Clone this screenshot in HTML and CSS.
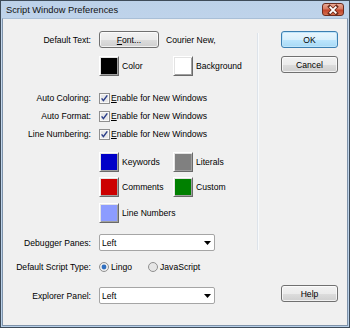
FILE: index.html
```html
<!DOCTYPE html>
<html>
<head>
<meta charset="utf-8">
<link rel="stylesheet" href="styles.css">
</head>
<body>
<div class="window">
  <div class="titlebar">
    <span class="title">Script Window Preferences</span>
    <div class="close">
      <svg width="21" height="12" viewBox="0 0 21 12">
        <path d="M7 2.5 L14 9.5 M14 2.5 L7 9.5" stroke="#6a2a1c" stroke-width="3.6" stroke-linecap="square"/>
        <path d="M7 2.5 L14 9.5 M14 2.5 L7 9.5" stroke="#ffffff" stroke-width="2"/>
      </svg>
    </div>
  </div>
  <div class="client">
    <div class="main">
      <div class="row r1">
        <span class="lbl">Default Text:</span>
        <div class="btn font-btn"><span><u>F</u>ont...</span></div>
        <span class="font-name">Courier New,</span>
      </div>
      <div class="row r2">
        <span class="lbl"></span>
        <div class="swatches">
          <div class="sw"><span class="chip" style="background:#000000"></span><span>Color</span></div>
          <div class="sw"><span class="chip" style="background:#ffffff"></span><span>Background</span></div>
        </div>
      </div>
      <div class="row r3">
        <span class="lbl">Auto Coloring:</span>
        <span class="check"><svg width="11" height="11" viewBox="0 0 11 11"><rect x="0.5" y="0.5" width="10" height="10" fill="#f4f4f4" stroke="#8f8f8f"/><rect x="1.5" y="1.5" width="8" height="8" fill="#e8e8e8" stroke="#f8f8f8"/><path d="M2.6 5.4 L4.4 7.6 L8.3 2.4" fill="none" stroke="#2b3f8a" stroke-width="1.5"/></svg></span>
        <span class="cl"><u>E</u>nable for New Windows</span>
      </div>
      <div class="row r4">
        <span class="lbl">Auto Format:</span>
        <span class="check"><svg width="11" height="11" viewBox="0 0 11 11"><rect x="0.5" y="0.5" width="10" height="10" fill="#f4f4f4" stroke="#8f8f8f"/><rect x="1.5" y="1.5" width="8" height="8" fill="#e8e8e8" stroke="#f8f8f8"/><path d="M2.6 5.4 L4.4 7.6 L8.3 2.4" fill="none" stroke="#2b3f8a" stroke-width="1.5"/></svg></span>
        <span class="cl"><u>E</u>nable for New Windows</span>
      </div>
      <div class="row r5">
        <span class="lbl">Line Numbering:</span>
        <span class="check"><svg width="11" height="11" viewBox="0 0 11 11"><rect x="0.5" y="0.5" width="10" height="10" fill="#f4f4f4" stroke="#8f8f8f"/><rect x="1.5" y="1.5" width="8" height="8" fill="#e8e8e8" stroke="#f8f8f8"/><path d="M2.6 5.4 L4.4 7.6 L8.3 2.4" fill="none" stroke="#2b3f8a" stroke-width="1.5"/></svg></span>
        <span class="cl"><u>E</u>nable for New Windows</span>
      </div>
      <div class="row r6">
        <span class="lbl"></span>
        <div class="swatches">
          <div class="sw"><span class="chip" style="background:#0000c8"></span><span>Keywords</span></div>
          <div class="sw"><span class="chip" style="background:#808080"></span><span>Literals</span></div>
        </div>
      </div>
      <div class="row r7">
        <span class="lbl"></span>
        <div class="swatches">
          <div class="sw"><span class="chip" style="background:#cc0000"></span><span>Comments</span></div>
          <div class="sw"><span class="chip" style="background:#008000"></span><span>Custom</span></div>
        </div>
      </div>
      <div class="row r8">
        <span class="lbl"></span>
        <div class="swatches">
          <div class="sw"><span class="chip" style="background:#8c9cff"></span><span>Line Numbers</span></div>
        </div>
      </div>
      <div class="row r9">
        <span class="lbl">Debugger Panes:</span>
        <div class="select"><span>Left</span><svg width="7" height="4" viewBox="0 0 7 4"><path d="M0 0 H7 L3.5 4 Z" fill="#000"/></svg></div>
      </div>
      <div class="row r10">
        <span class="lbl">Default Script Type:</span>
        <span class="radio"><svg width="10" height="10" viewBox="0 0 10 10"><circle cx="5" cy="5" r="4.5" fill="#eeeeee" stroke="#8f8f8f"/><circle cx="5" cy="5" r="2.4" fill="#2f6fc0"/></svg></span>
        <span class="rl">Lingo</span>
        <span class="radio r2nd"><svg width="10" height="10" viewBox="0 0 10 10"><circle cx="5" cy="5" r="4.5" fill="#e6e6e6" stroke="#8f8f8f"/></svg></span>
        <span class="rl">JavaScript</span>
      </div>
      <div class="row r11">
        <span class="lbl">Explorer Panel:</span>
        <div class="select"><span>Left</span><svg width="7" height="4" viewBox="0 0 7 4"><path d="M0 0 H7 L3.5 4 Z" fill="#000"/></svg></div>
      </div>
    </div>
    <div class="sep"></div>
    <div class="side">
      <div class="btn default">OK</div>
      <div class="btn cancel">Cancel</div>
      <div class="btn help">Help</div>
    </div>
  </div>
</div>
</body>
</html>
```

FILE: styles.css
```css
* { box-sizing: border-box; }
html, body { margin: 0; padding: 0; }
body {
  width: 350px;
  height: 328px;
  overflow: hidden;
  font-family: "Liberation Sans", Arial, sans-serif;
  font-size: 8.6px;
  color: #000;
  background: #f0f0f0;
}
.window {
  width: 350px;
  height: 328px;
  border: 1px solid #3e4b59;
  background: linear-gradient(#bcd1e9, #c6d9ee 60px, #b7cfe8);
  padding: 0 1px 1px 1px;
  display: flex;
  flex-direction: column;
}
.titlebar {
  height: 17px;
  flex: none;
  display: flex;
  align-items: flex-start;
  justify-content: space-between;
  padding-left: 4px;
  padding-right: 4px;
}
.title {
  font-size: 9.3px;
  color: #111;
  margin-top: 4px;
}
.close {
  width: 22px;
  height: 13px;
  margin-top: 2px;
  border: 1px solid #6b2c1f;
  border-radius: 3px;
  background: linear-gradient(#e9a996, #d97a62 45%, #c2432a 55%, #d4704f);
  display: flex;
  align-items: center;
  justify-content: center;
}
.close svg { display: block; }
.client {
  flex: 1;
  display: flex;
  background: #f0f0f0;
  border: 1px solid #7f93aa;
  border-top-color: #a9bfd7;
}
.main {
  width: 254px;
  flex: none;
  padding-top: 12px;
  display: flex;
  flex-direction: column;
}
.row {
  display: flex;
  align-items: center;
  white-space: nowrap;
}
.lbl {
  width: 88px;
  flex: none;
  text-align: right;
  margin-right: 8px;
}
.r1 { height: 17px; }
.r2 { height: 20px; margin-top: 8px; }
.r3 { height: 14px; margin-top: 15px; }
.r4 { height: 14px; margin-top: 4px; }
.r5 { height: 14px; margin-top: 4px; }
.r6 { height: 20px; margin-top: 11px; }
.r7 { height: 20px; margin-top: 5px; }
.r8 { height: 20px; margin-top: 6px; }
.r9 { height: 17px; margin-top: 11px; }
.r10 { height: 14px; margin-top: 9px; }
.r11 { height: 17px; margin-top: 13px; }

.btn {
  height: 17px;
  border: 1px solid #707070;
  border-radius: 3px;
  background: linear-gradient(#f2f2f2, #ebebeb 50%, #dddddd 51%, #cfcfcf);
  box-shadow: inset 0 0 0 1px rgba(255,255,255,0.7);
  display: flex;
  align-items: center;
  justify-content: center;
}
.font-btn { width: 60px; }
.font-name { margin-left: 7px; }

.swatches {
  display: grid;
  grid-template-columns: 74px auto;
}
.sw {
  display: flex;
  align-items: center;
}
.chip {
  width: 20px;
  height: 20px;
  border: 1px solid;
  border-color: #ffffff #6a6a6a #6a6a6a #ffffff;
  box-shadow: inset 1px 1px 0 #e3e3e3, inset -1px -1px 0 #a0a0a0;
  margin-right: 3px;
  flex: none;
}
.check { width: 11px; height: 11px; flex: none; margin-right: 1px; }
.check svg, .radio svg { display: block; }
.radio { width: 10px; height: 10px; flex: none; margin-right: 2px; }
.r2nd { margin-left: 16px; }

.select {
  width: 116px;
  height: 17px;
  background: #fff;
  border: 1px solid #a5a5a5;
  border-radius: 2px;
  display: flex;
  align-items: center;
  justify-content: space-between;
  padding-left: 2px;
  padding-right: 3px;
}
.select svg { display: block; }

.sep {
  width: 2px;
  height: 217px;
  margin-top: 14px;
  border-left: 1px solid #dde3ea;
  border-right: 1px solid #f8fafc;
  flex: none;
}
.side {
  flex: 1;
  display: flex;
  flex-direction: column;
  padding-left: 22px;
  padding-top: 12px;
  padding-bottom: 23px;
}
.side .btn { width: 57px; }
.default {
  border-color: #3c7fb1;
  background: linear-gradient(#eaf6fd, #d9f0fc 50%, #bee6fd 51%, #a7d9f5);
  box-shadow: inset 0 0 0 1px #bfe5fb;
}
.cancel { margin-top: 8px; }
.help { margin-top: auto; }
```
